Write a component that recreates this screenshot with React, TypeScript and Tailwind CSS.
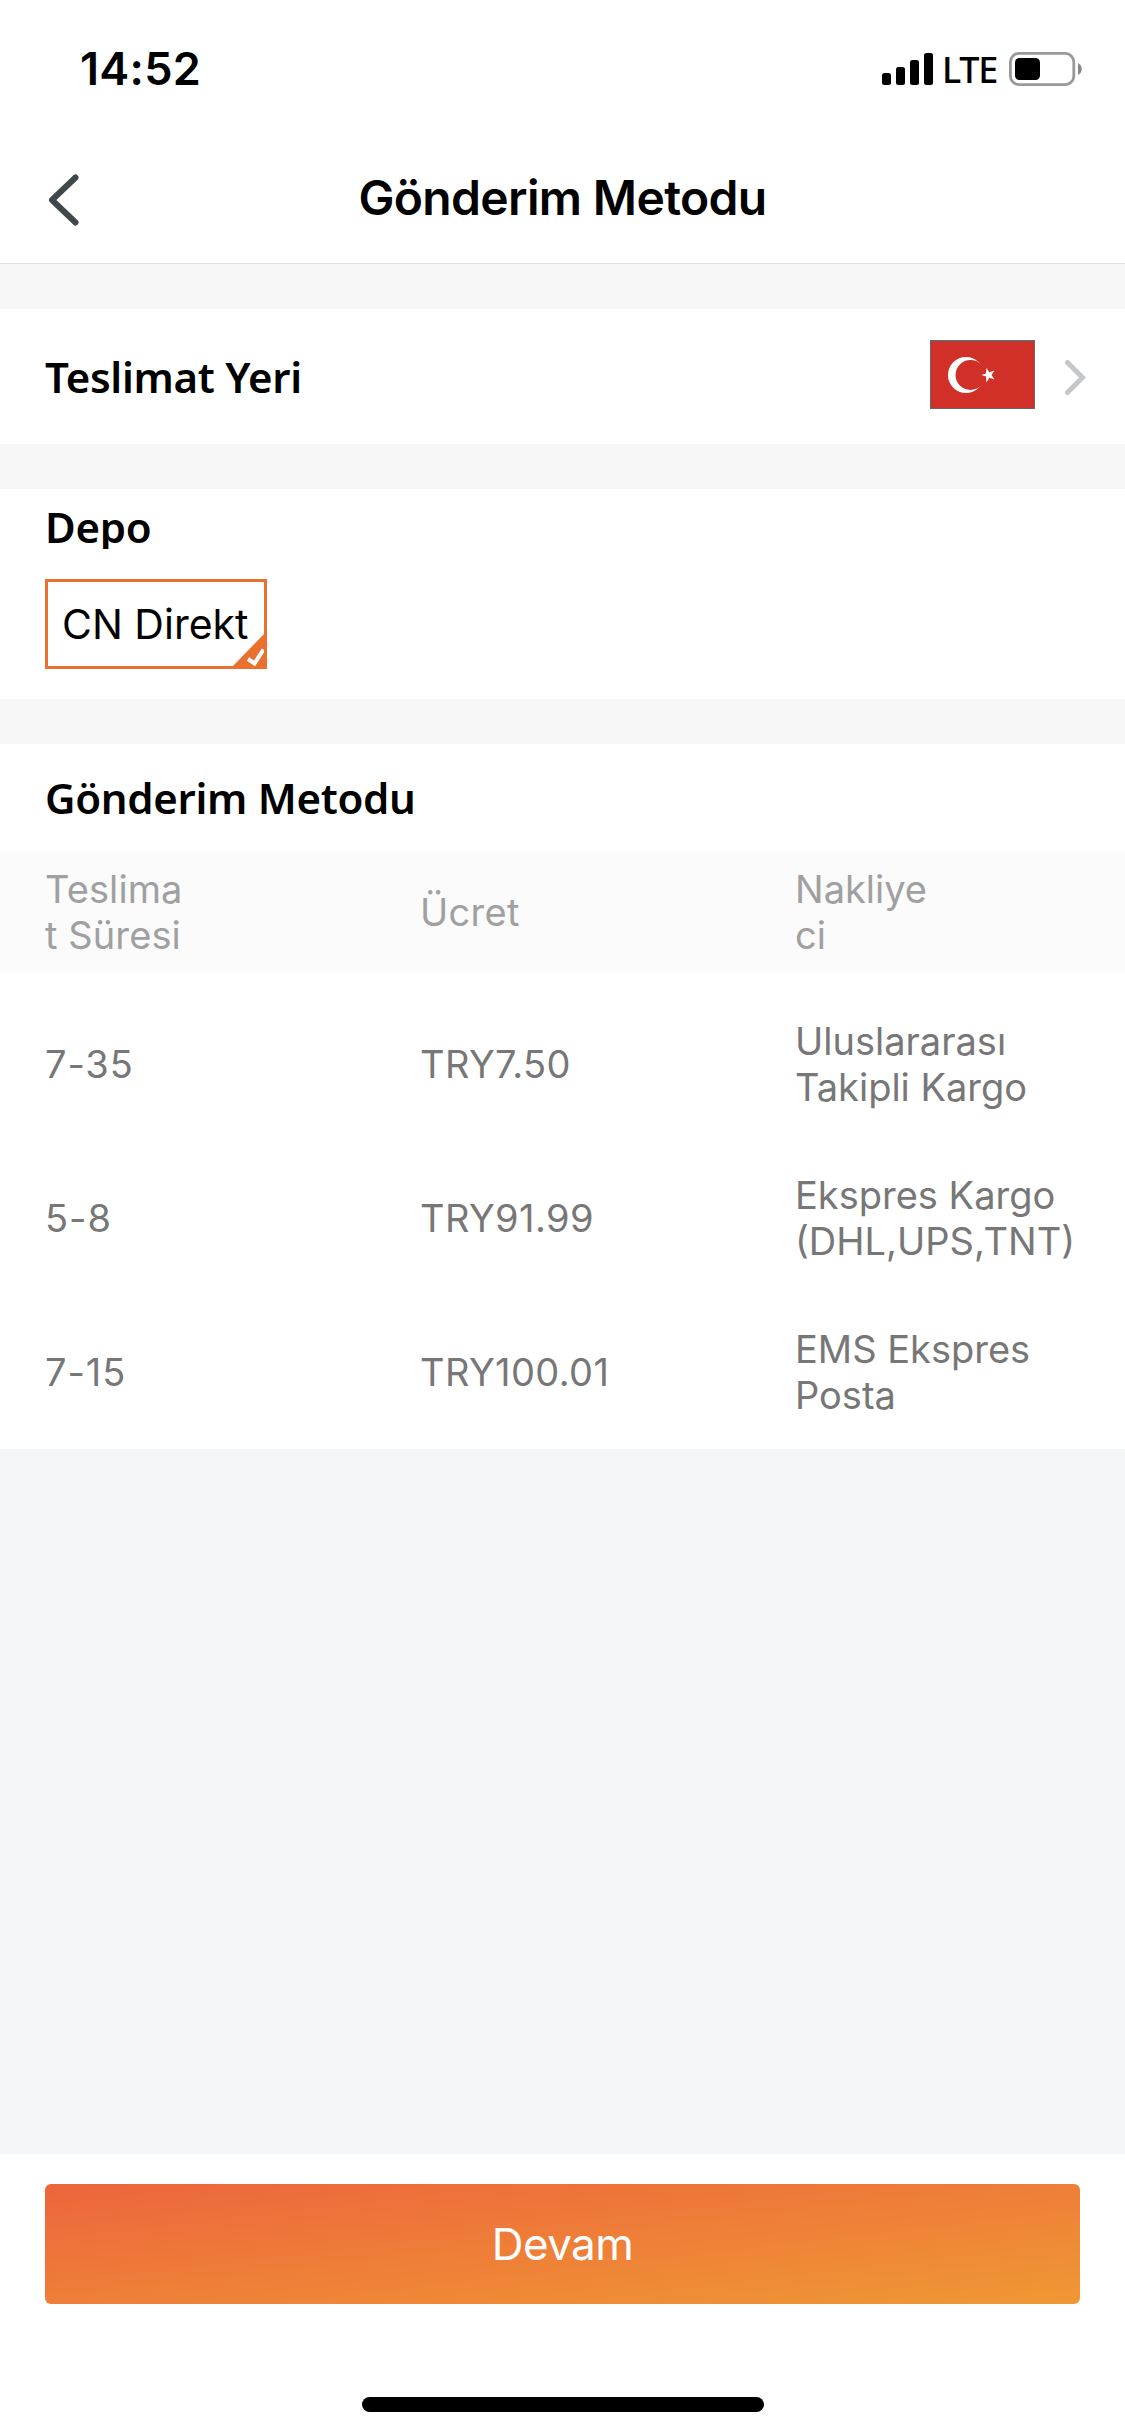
import React from 'react';

const METHODS = [
  { time: '7-35', price: 'TRY7.50', carrier: ['Uluslararası', 'Takipli Kargo'] },
  { time: '5-8', price: 'TRY91.99', carrier: ['Ekspres Kargo', '(DHL,UPS,TNT)'] },
  { time: '7-15', price: 'TRY100.01', carrier: ['EMS Ekspres', 'Posta'] },
];

const StatusBar: React.FC = () => (
  <div className="flex h-[132px] items-start justify-between pl-[80px] pr-[43px] text-black">
    <span className="mt-[42px] text-[45px] leading-[54px] font-semibold tracking-[0.3px]">14:52</span>
    <div className="mt-[52px] flex h-[34px] items-center">
      <svg width="51" height="34" viewBox="0 0 51 34">
        <rect x="0" y="21" width="9" height="12" rx="2.5" />
        <rect x="14" y="15" width="9" height="18" rx="2.5" />
        <rect x="28" y="8" width="9" height="25" rx="2.5" />
        <rect x="42" y="1" width="9" height="32" rx="2.5" />
      </svg>
      <span className="ml-[9px] w-[67px] pt-[1px] font-['Noto_Sans',sans-serif] text-[36px] leading-[34px] font-medium tracking-[-1.3px]">LTE</span>
      <svg width="73" height="34" viewBox="0 0 73 34">
        <rect x="1.4" y="1.4" width="63.4" height="31.2" rx="8.5" fill="none" stroke="#999" strokeWidth="2.8" />
        <rect x="6" y="6" width="25" height="22" rx="4.5" />
        <path d="M69 11 C74 13.500 74 20.500 69 23 Z" fill="#888" />
      </svg>
    </div>
  </div>
);

const TurkishFlag: React.FC = () => (
  <svg className="mb-[4px]" width="105" height="69" viewBox="0 0 105 69">
    <rect width="105" height="69" fill="#6c6665" />
    <rect x="1" y="1.600" width="103" height="66.400" fill="#d03028" />
    <circle cx="36" cy="35" r="18" fill="#fff" />
    <circle cx="40.500" cy="35" r="15" fill="#d03028" />
    <path
      d="M51.500 35 L56 33.400 L56.400 28 L59.400 32.200 L64.500 30.600 L61.500 35 L64.500 39.400 L59.400 37.800 L56.400 42.400 L56 36.600 Z"
      fill="#fff"
    />
  </svg>
);

const App: React.FC = () => {
  return (
    <div className="flex h-[2436px] w-[1125px] flex-col overflow-hidden bg-[#f4f5f7] font-['Inter',sans-serif] text-black">
      <header className="h-[264px] border-b border-[#e3e3e3] bg-white">
        <StatusBar />
        <div className="grid h-[131px] grid-cols-[200px_1fr_200px] items-center">
          <svg className="mt-[5px] ml-[48px]" width="32" height="52" viewBox="0 0 32 52">
            <path d="M27.500 3.500 L4 26 L27.500 48.500" fill="none" stroke="#41484c" strokeWidth="6" strokeLinecap="round" strokeLinejoin="round" />
          </svg>
          <h1 className="text-center text-[48px] leading-[60px] font-semibold tracking-[-0.65px]">Gönderim Metodu</h1>
        </div>
      </header>

      <main className="bg-[#f7f7f7] pt-[45px]">
        <section className="flex h-[135px] items-center bg-white pr-[38px] pl-[45px]">
          <h2 className="flex-1 font-['Noto_Sans',sans-serif] text-[42px] leading-[58px] font-semibold tracking-[-0.3px]">Teslimat Yeri</h2>
          <TurkishFlag />
          <svg className="ml-[28px]" width="24" height="38" viewBox="0 0 24 38">
            <path d="M4.500 4.500 L19.500 19.500 L4.500 34.500" fill="none" stroke="#c5c7c9" strokeWidth="5" strokeLinecap="round" />
          </svg>
        </section>

        <section className="mt-[45px] h-[210px] bg-white px-[45px] pt-[8px]">
          {/* the heading line is lower than its descenders, so they are clipped */}
          <h2 className="h-[52px] overflow-hidden font-['Noto_Sans',sans-serif] text-[42px] leading-[60px] font-semibold tracking-[-0.3px]">Depo</h2>
          <button className="relative mt-[30px] flex h-[90px] w-[222px] items-center border-3 border-[#ea7030] pl-[14px] text-[41px] leading-[50px] whitespace-nowrap">
            CN Direkt
            <svg className="absolute right-0 bottom-0" width="31" height="32" viewBox="0 0 31 32">
              <path d="M31 0 V32 H0 Z" fill="#ea7030" />
              <path d="M15 25 L21.500 29.500 L30.500 15.500" fill="none" stroke="#fff" strokeWidth="4" />
            </svg>
          </button>
        </section>

        <section className="mt-[45px] h-[705px] bg-white">
          <h2 className="h-[108px] px-[45px] font-['Noto_Sans',sans-serif] text-[42px] leading-[108px] font-semibold tracking-[-0.3px]">Gönderim Metodu</h2>
          <div className="mb-[15px] grid h-[120px] grid-cols-[375px_375px_285px] items-center bg-[#fbfbfb] px-[45px] text-[38px] leading-[46px] text-[#a0a0a0]">
            <div className="tracking-[0.1px]">Teslima<br />t Süresi</div>
            <div className="tracking-[0.3px]">Ücret</div>
            <div>Nakliye<br />ci</div>
          </div>
          {METHODS.map((method) => (
            <div
              key={method.price}
              className="grid h-[154px] grid-cols-[375px_375px_285px] items-center px-[45px] text-[38px] leading-[46px] text-[#777]"
            >
              <div className="tracking-[0.9px]">{method.time}</div>
              <div className="tracking-[0.4px]">{method.price}</div>
              <div className="whitespace-nowrap">
                {method.carrier[0]}
                <br />
                {method.carrier[1]}
              </div>
            </div>
          ))}
        </section>
      </main>

      <footer className="mt-auto flex h-[282px] flex-col bg-white px-[45px] pt-[30px]">
        <button className="h-[120px] rounded-md bg-linear-to-br/srgb from-[#ed653c] to-[#ef9834] text-[44px] tracking-[-0.6px] text-white">Devam</button>
        <div className="mx-auto mt-[93px] h-[15px] w-[402px] rounded-full bg-black" />
      </footer>
    </div>
  );
};

export default App;
